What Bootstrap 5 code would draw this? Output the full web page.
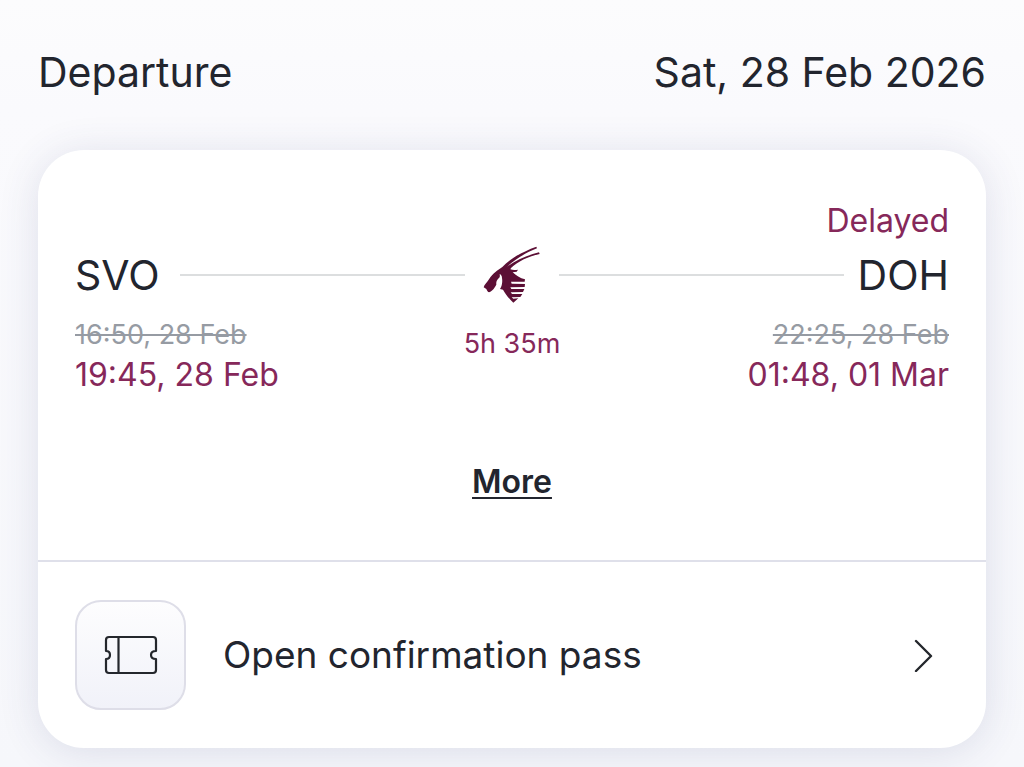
<!DOCTYPE html>
<html lang="en">
<head>
<meta charset="utf-8">
<meta name="viewport" content="width=device-width, initial-scale=1">
<title>Departure</title>
<link href="https://cdn.jsdelivr.net/npm/bootstrap@5.3.0/dist/css/bootstrap.min.css" rel="stylesheet">
<style>
  body {
    font-family: Inter, "Liberation Sans", sans-serif;
    color: #22252e;
    background: linear-gradient(#fcfcfd, #fafafd 110px, #f6f7fb 100%) no-repeat #f6f7fb;
    min-height: 100vh;
    overflow-x: hidden;
  }
  .trip { padding: 48px 38px 19px; }
  .text-title { font-size: 41px; line-height: 48px; font-weight: 400; }
  .text-action { font-size: 37px; line-height: 46px; }
  .text-body-lg { font-size: 32px; line-height: 40px; }
  .text-note { font-size: 27px; line-height: 40px; }
  .text-maroon { color: #86285a; }
  .text-muted-old { color: #969ba3; text-decoration-thickness: 2px; }
  .flight-card {
    margin-top: 54px;
    border: 0;
    border-radius: 46px;
    box-shadow: 0 4px 40px rgba(60, 65, 120, .14);
  }
  .flight-body { padding: 51px 37px 58px; }
  .route {
    display: grid;
    grid-template-columns: 105px 1fr 94px 1fr 105px;
    align-items: center;
    height: 68px;
  }
  .route-line { height: 2px; background: #dcdedf; }
  .times { display: grid; grid-template-columns: 1fr auto 1fr; margin-top: 6px; }
  .duration { line-height: 58px; }
  .more-link { font-weight: 600; color: inherit; text-decoration-thickness: 2px; text-underline-offset: 4px; }
  .more-row { margin-top: 67px; }
  .pass-link {
    padding: 38px 37px;
    border-top: 2px solid #dfe0ea;
    color: inherit;
    gap: 37px;
  }
  .pass-icon {
    width: 111px;
    height: 110px;
    border: 2px solid #dedee8;
    border-radius: 26px;
    background: linear-gradient(#fdfdfe, #f1f2f9);
  }
  .chevron { margin-right: 16px; }
</style>
</head>
<body>
<main class="trip">
  <header class="d-flex justify-content-between">
    <h1 class="text-title m-0">Departure</h1>
    <time class="text-title" datetime="2026-02-28">Sat, 28 Feb 2026</time>
  </header>

  <section class="card flight-card">
    <div class="flight-body">
      <div class="text-body-lg text-maroon text-end">Delayed</div>
      <div class="route">
        <span class="text-title">SVO</span>
        <span class="route-line"></span>
        <svg class="mx-auto" width="58" height="58" viewBox="40 34 174 174" fill="#5c0f35" role="img" aria-label="Qatar Airways">
          <path d="M42 158 C44 150 52 144 58 134 C68 117 84 107 98 97 C122 72 156 52 200 36 L202 41 C166 55 134 76 112 96 C138 77 168 63 208 53 L210 58 C176 65 146 80 124 100 L122 104 C130 107 138 106 145 105 L141 111 L129 113 C139 123 151 131 166 134 L165 141 L124 141 L126 147 L166 148 L165 157 L122 158 L125 163 L164 163 L160 172 L123 173 L127 178 L158 178 L152 187 L126 188 L131 192 L146 191 L131 204 C120 194 108 180 100 165 L91 163 C97 153 99 142 97 130 C97 124 94 120 90 118 C91 124 91 128 87 131 C81 136 79 143 80 150 C75 160 68 168 61 172 C55 174 53 169 50 163 Z"/>
        </svg>
        <span class="route-line"></span>
        <span class="text-title text-end">DOH</span>
      </div>
      <div class="times">
        <div>
          <s class="text-note text-muted-old d-block">16:50, 28 Feb</s>
          <div class="text-body-lg text-maroon">19:45, 28 Feb</div>
        </div>
        <div class="text-note duration text-maroon">5h 35m</div>
        <div class="text-end">
          <s class="text-note text-muted-old d-block">22:25, 28 Feb</s>
          <div class="text-body-lg text-maroon">01:48, 01 Mar</div>
        </div>
      </div>
      <div class="more-row text-center text-body-lg">
        <a class="more-link" href="#">More</a>
      </div>
    </div>
    <a class="pass-link d-flex align-items-center text-decoration-none" href="#">
      <span class="pass-icon d-flex align-items-center justify-content-center flex-shrink-0">
        <svg width="54" height="40" viewBox="0 0 54 40" fill="none" stroke="#24272c" stroke-width="2.2" stroke-linejoin="round" aria-hidden="true">
          <path d="M5 2 H49 Q52 2 52 5 V16 Q47 16 47 20 Q47 24 52 24 V35 Q52 38 49 38 H5 Q2 38 2 35 V24 Q6 24 6 20 Q6 16 2 16 V5 Q2 2 5 2 Z M14.500 2 V38"/>
        </svg>
      </span>
      <span class="text-action flex-grow-1">Open confirmation pass</span>
      <svg class="chevron flex-shrink-0" width="20" height="34" viewBox="0 0 20 34" fill="none" stroke="#24272c" stroke-width="2.400" stroke-linecap="round" stroke-linejoin="round" aria-hidden="true">
        <path d="M3 3 L18 18 L3 33"/>
      </svg>
    </a>
  </section>
</main>
<script src="https://cdn.jsdelivr.net/npm/bootstrap@5.3.0/dist/js/bootstrap.bundle.min.js"></script>
</body>
</html>
